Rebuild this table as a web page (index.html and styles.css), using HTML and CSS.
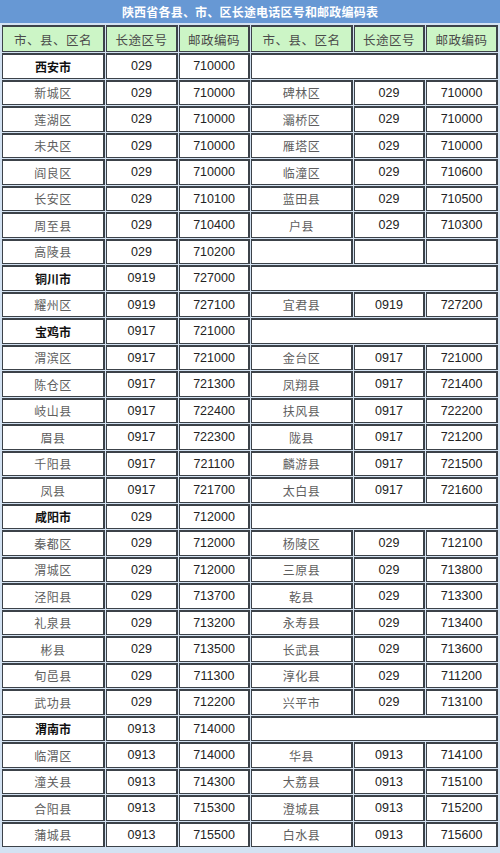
FILE: index.html
```html
<!DOCTYPE html>
<html lang="zh-CN">
<head>
<meta charset="utf-8">
<title>陕西省各县、市、区长途电话区号和邮政编码表</title>
<link rel="stylesheet" href="styles.css">
</head>
<body>
<div class="sheet">
  <div class="title">陕西省各县、市、区长途电话区号和邮政编码表</div>
  <table class="codes">
    <colgroup>
      <col class="c-name"><col class="c-code"><col class="c-post">
      <col class="c-name2"><col class="c-code2"><col class="c-post2">
    </colgroup>
    <thead>
      <tr class="head">
        <th>市、县、区名</th><th>长途区号</th><th>邮政编码</th>
        <th>市、县、区名</th><th>长途区号</th><th>邮政编码</th>
      </tr>
    </thead>
    <tbody>
      <tr><td class="city">西安市</td><td class="num">029</td><td class="num">710000</td><td colspan="3"></td></tr>
      <tr><td class="name">新城区</td><td class="num">029</td><td class="num">710000</td><td class="name">碑林区</td><td class="num">029</td><td class="num">710000</td></tr>
      <tr><td class="name">莲湖区</td><td class="num">029</td><td class="num">710000</td><td class="name">灞桥区</td><td class="num">029</td><td class="num">710000</td></tr>
      <tr><td class="name">未央区</td><td class="num">029</td><td class="num">710000</td><td class="name">雁塔区</td><td class="num">029</td><td class="num">710000</td></tr>
      <tr><td class="name">阎良区</td><td class="num">029</td><td class="num">710000</td><td class="name">临潼区</td><td class="num">029</td><td class="num">710600</td></tr>
      <tr><td class="name">长安区</td><td class="num">029</td><td class="num">710100</td><td class="name">蓝田县</td><td class="num">029</td><td class="num">710500</td></tr>
      <tr><td class="name">周至县</td><td class="num">029</td><td class="num">710400</td><td class="name">户县</td><td class="num">029</td><td class="num">710300</td></tr>
      <tr><td class="name">高陵县</td><td class="num">029</td><td class="num">710200</td><td></td><td></td><td></td></tr>
      <tr><td class="city">铜川市</td><td class="num">0919</td><td class="num">727000</td><td colspan="3"></td></tr>
      <tr><td class="name">耀州区</td><td class="num">0919</td><td class="num">727100</td><td class="name">宜君县</td><td class="num">0919</td><td class="num">727200</td></tr>
      <tr><td class="city">宝鸡市</td><td class="num">0917</td><td class="num">721000</td><td colspan="3"></td></tr>
      <tr><td class="name">渭滨区</td><td class="num">0917</td><td class="num">721000</td><td class="name">金台区</td><td class="num">0917</td><td class="num">721000</td></tr>
      <tr><td class="name">陈仓区</td><td class="num">0917</td><td class="num">721300</td><td class="name">凤翔县</td><td class="num">0917</td><td class="num">721400</td></tr>
      <tr><td class="name">岐山县</td><td class="num">0917</td><td class="num">722400</td><td class="name">扶风县</td><td class="num">0917</td><td class="num">722200</td></tr>
      <tr><td class="name">眉县</td><td class="num">0917</td><td class="num">722300</td><td class="name">陇县</td><td class="num">0917</td><td class="num">721200</td></tr>
      <tr><td class="name">千阳县</td><td class="num">0917</td><td class="num">721100</td><td class="name">麟游县</td><td class="num">0917</td><td class="num">721500</td></tr>
      <tr><td class="name">凤县</td><td class="num">0917</td><td class="num">721700</td><td class="name">太白县</td><td class="num">0917</td><td class="num">721600</td></tr>
      <tr><td class="city">咸阳市</td><td class="num">029</td><td class="num">712000</td><td colspan="3"></td></tr>
      <tr><td class="name">秦都区</td><td class="num">029</td><td class="num">712000</td><td class="name">杨陵区</td><td class="num">029</td><td class="num">712100</td></tr>
      <tr><td class="name">渭城区</td><td class="num">029</td><td class="num">712000</td><td class="name">三原县</td><td class="num">029</td><td class="num">713800</td></tr>
      <tr><td class="name">泾阳县</td><td class="num">029</td><td class="num">713700</td><td class="name">乾县</td><td class="num">029</td><td class="num">713300</td></tr>
      <tr><td class="name">礼泉县</td><td class="num">029</td><td class="num">713200</td><td class="name">永寿县</td><td class="num">029</td><td class="num">713400</td></tr>
      <tr><td class="name">彬县</td><td class="num">029</td><td class="num">713500</td><td class="name">长武县</td><td class="num">029</td><td class="num">713600</td></tr>
      <tr><td class="name">旬邑县</td><td class="num">029</td><td class="num">711300</td><td class="name">淳化县</td><td class="num">029</td><td class="num">711200</td></tr>
      <tr><td class="name">武功县</td><td class="num">029</td><td class="num">712200</td><td class="name">兴平市</td><td class="num">029</td><td class="num">713100</td></tr>
      <tr><td class="city">渭南市</td><td class="num">0913</td><td class="num">714000</td><td colspan="3"></td></tr>
      <tr><td class="name">临渭区</td><td class="num">0913</td><td class="num">714000</td><td class="name">华县</td><td class="num">0913</td><td class="num">714100</td></tr>
      <tr><td class="name">潼关县</td><td class="num">0913</td><td class="num">714300</td><td class="name">大荔县</td><td class="num">0913</td><td class="num">715100</td></tr>
      <tr><td class="name">合阳县</td><td class="num">0913</td><td class="num">715300</td><td class="name">澄城县</td><td class="num">0913</td><td class="num">715200</td></tr>
      <tr><td class="name">蒲城县</td><td class="num">0913</td><td class="num">715500</td><td class="name">白水县</td><td class="num">0913</td><td class="num">715600</td></tr>
    </tbody>
  </table>
</div>
</body>
</html>
```

FILE: styles.css
```css
html, body {
  margin: 0;
  padding: 0;
  background: #d3e2f2;
}

.sheet {
  width: 500px;
  background: #d3e2f2;
}

.title {
  height: 23px;
  line-height: 23px;
  background: #6798d4;
  color: #ffffff;
  text-align: center;
  font-family: "Noto Sans CJK SC", "Noto Sans", sans-serif;
  font-weight: 700;
  font-size: 12px;
  letter-spacing: 0.2px;
}

.codes {
  width: 500px;
  table-layout: fixed;
  border-collapse: separate;
  border-spacing: 1px;
  padding: 1px;
  background: #d3e2f2;
}

.c-name { width: 103px; }
.c-code { width: 72px; }
.c-post { width: 71px; }
.c-name2 { width: 102px; }
.c-code2 { width: 71px; }
.c-post2 { width: 72px; }

.codes th,
.codes td {
  padding: 0;
  text-align: center;
  vertical-align: middle;
  border-style: solid;
  border-color: #3c4249;
  border-width: 2px 2px 1px 1px;
  background: #ffffff;
  overflow: hidden;
  white-space: nowrap;
}

.head {
  height: 27px;
}

.codes th {
  background: #ccf5c6;
  color: #4a4a4a;
  font-family: "Noto Sans CJK SC", "Noto Sans", sans-serif;
  font-weight: 400;
  font-size: 12.5px;
  letter-spacing: 0.5px;
}

.codes tbody tr {
  height: 25.5px;
}

.name {
  font-family: "Noto Sans CJK SC", "Noto Sans", sans-serif;
  font-size: 12px;
  color: #5e5e5e;
  letter-spacing: 0.5px;
}

.city {
  font-family: "Noto Sans CJK SC", "Noto Sans", sans-serif;
  font-size: 12px;
  font-weight: 700;
  color: #111111;
}

.num {
  font-family: "Liberation Sans", Arial, sans-serif;
  font-size: 12.5px;
  color: #222222;
}
```
